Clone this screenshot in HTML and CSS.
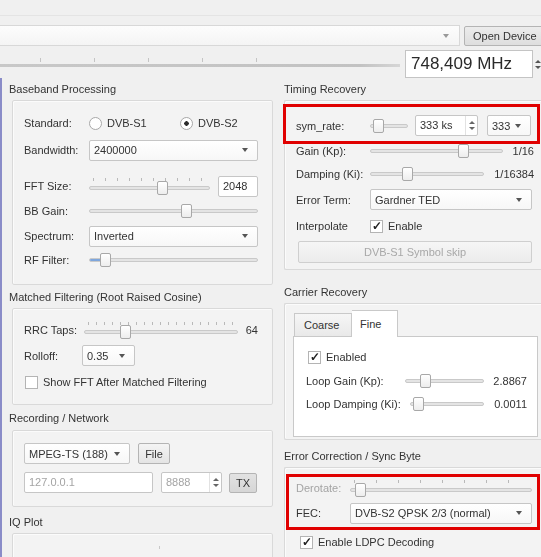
FILE: index.html
```html
<!DOCTYPE html>
<html>
<head>
<meta charset="utf-8">
<title>DVB-S2 Receiver</title>
<link rel="stylesheet" href="styles.css">
</head>
<body>
<div class="app">
  <div class="top">
    <div class="hline"></div>
    <div class="toprow1">
      <div class="devcombo"><span class="caret sm"></span></div>
      <div class="btn open">Open Device</div>
    </div>
    <div class="toprow2">
      <div class="freqslider"><div class="fticks"></div><div class="fgroove"></div></div>
      <div class="freq">748,409 MHz</div>
      <div class="fspin"><span class="u"></span><span class="d"></span></div>
    </div>
  </div>

  <div class="cols">
    <div class="col left">
      <div class="gtitle">Baseband Processing</div>
      <div class="gbox lbox bb">
        <div class="row">
          <span class="lbl w65">Standard:</span>
          <span class="radio"></span><span class="rtext first">DVB-S1</span>
          <span class="radio on"></span><span class="rtext">DVB-S2</span>
        </div>
        <div class="row m7">
          <span class="lbl w65">Bandwidth:</span>
          <div class="combo grow"><span class="ctext">2400000</span><span class="caret"></span></div>
        </div>
        <div class="row h22 m15">
          <span class="lbl w65">FFT Size:</span>
          <div class="slider ticked grow"><div class="ticks t12"></div><div class="groove"></div><div class="handle" style="left:68px"></div></div>
          <div class="edit w40 ml8">2048</div>
        </div>
        <div class="row m4">
          <span class="lbl w65">BB Gain:</span>
          <div class="slider grow"><div class="groove"></div><div class="handle" style="left:92px"></div></div>
        </div>
        <div class="row m5">
          <span class="lbl w65">Spectrum:</span>
          <div class="combo grow"><span class="ctext">Inverted</span><span class="caret"></span></div>
        </div>
        <div class="row m4">
          <span class="lbl w65">RF Filter:</span>
          <div class="slider grow"><div class="groove"><div class="fill" style="width:12px"></div></div><div class="handle" style="left:11px"></div></div>
        </div>
      </div>

      <div class="gtitle t2">Matched Filtering (Root Raised Cosine)</div>
      <div class="gbox lbox mf">
        <div class="row">
          <span class="lbl w60">RRC Taps:</span>
          <div class="slider ticked grow"><div class="ticks t8"></div><div class="groove"></div><div class="handle" style="left:36px"></div></div>
          <span class="val w20">64</span>
        </div>
        <div class="row h21 m5">
          <span class="lbl w58">Rolloff:</span>
          <div class="combo w53"><span class="ctext">0.35</span><span class="caret"></span></div>
        </div>
        <div class="row m6">
          <span class="check ml1"></span><span class="ctxt">Show FFT After Matched Filtering</span>
        </div>
      </div>

      <div class="gtitle t3">Recording / Network</div>
      <div class="gbox lbox rec">
        <div class="row h21">
          <div class="combo w106"><span class="ctext">MPEG-TS (188)</span><span class="caret"></span></div>
          <div class="btn w32 ml8">File</div>
        </div>
        <div class="row h21 m8">
          <div class="edit w129 dis">127.0.0.1</div>
          <div class="spin w61 ml8"><span class="sval dis">8888</span><span class="arr"><span class="u"></span><span class="d"></span></span></div>
          <div class="btn tx w28 ml7">TX</div>
        </div>
      </div>

      <div class="gtitle t4">IQ Plot</div>
      <div class="gbox lbox iq"><span class="iqdot"></span></div>
    </div>

    <div class="col right">
      <div class="gtitle">Timing Recovery</div>
      <div class="gbox rbox tr">
        <div class="redbox rb1">
          <div class="row h21">
            <span class="lbl w74">sym_rate:</span>
            <div class="slider w38"><div class="groove"></div><div class="handle" style="left:3px"></div></div>
            <div class="spin w63 ml7"><span class="sval">333 ks</span><span class="arr"><span class="u"></span><span class="d"></span></span></div>
            <div class="combo w44 ml9"><span class="ctext">333</span><span class="caret"></span></div>
          </div>
        </div>
        <div class="row rrow h14">
          <span class="lbl w74">Gain (Kp):</span>
          <div class="slider w133"><div class="groove"></div><div class="handle" style="left:88px"></div></div>
          <span class="val grow">1/16</span>
        </div>
        <div class="row rrow h14 m9">
          <span class="lbl w74">Damping (Ki):</span>
          <div class="slider w114"><div class="groove"></div><div class="handle" style="left:32px"></div></div>
          <span class="val grow">1/16384</span>
        </div>
        <div class="row rrow h21 m8">
          <span class="lbl w74">Error Term:</span>
          <div class="combo grow"><span class="ctext">Gardner TED</span><span class="caret"></span></div>
        </div>
        <div class="row rrow m6">
          <span class="lbl w74">Interpolate</span>
          <span class="check on">✓</span><span class="ctxt">Enable</span>
        </div>
        <div class="btn wide dis">DVB-S1 Symbol skip</div>
      </div>

      <div class="gtitle t5">Carrier Recovery</div>
      <div class="gbox rbox cr">
        <div class="tabs">
          <div class="tab">Coarse</div>
          <div class="tab sel">Fine</div>
        </div>
        <div class="pane">
          <div class="row prow">
            <span class="check on ml2">✓</span><span class="ctxt">Enabled</span>
          </div>
          <div class="row prow m4">
            <span class="lbl w99">Loop Gain (Kp):</span>
            <div class="slider w79"><div class="groove"></div><div class="handle" style="left:15px"></div></div>
            <span class="val grow">2.8867</span>
          </div>
          <div class="row prow m3">
            <span class="lbl w104">Loop Damping (Ki):</span>
            <div class="slider w74s"><div class="groove"></div><div class="handle" style="left:3px"></div></div>
            <span class="val grow">0.0011</span>
          </div>
        </div>
      </div>

      <div class="gtitle t6">Error Correction / Sync Byte</div>
      <div class="gbox rbox ec">
        <div class="redbox rb2">
          <div class="row">
            <span class="lbl w54 dis">Derotate:</span>
            <div class="slider ticked grow"><div class="ticks t22"></div><div class="groove"></div><div class="handle" style="left:5px"></div></div>
          </div>
          <div class="row h22 m4">
            <span class="lbl w54">FEC:</span>
            <div class="combo grow"><span class="ctext">DVB-S2 QPSK 2/3 (normal)</span><span class="caret"></span></div>
          </div>
        </div>
        <div class="row ldpc m2">
          <span class="check on">✓</span><span class="ctxt">Enable LDPC Decoding</span>
        </div>
      </div>
    </div>
  </div>
</div>
</body>
</html>
```

FILE: styles.css
```css
* { box-sizing: border-box; }
html, body { margin: 0; padding: 0; }
body {
  background: #f0f0f0;
  font-family: "Liberation Sans", Arial, sans-serif;
  font-size: 11px;
  color: #333;
  width: 541px;
  height: 557px;
  overflow: hidden;
}
.app { width: 541px; height: 557px; overflow: hidden; filter: blur(0.35px); }

/* top */
.top { height: 78px; padding-top: 15px; }
.hline { height: 1px; background: #e4e4e4; }
.toprow1 { display: flex; margin-top: 9px; height: 21px; }
.devcombo {
  width: 460px; flex: none; height: 21px;
  background: linear-gradient(#fdfdfd, #f4f4f4);
  border: 1px solid #d8d8d8; border-left: none;
  display: flex; align-items: center; justify-content: flex-end; padding-right: 10px;
}
.btn {
  display: flex; align-items: center; justify-content: center;
  background: linear-gradient(#f4f4f4, #e4e4e4);
  border: 1px solid #b4b4b4; border-radius: 2px; height: 21px; flex: none;
}
.btn.open { margin-left: 4px; width: 84px; height: 20px; margin-top: 1px; justify-content: flex-start; padding-left: 8px; background: linear-gradient(#ececec, #dedede); }
.toprow2 { display: flex; margin-top: 4px; height: 28px; }
.freqslider { width: 400px; flex: none; position: relative; }
.fticks { margin-top: 8px; margin-left: 40px; margin-right: 110px; height: 4px; background: repeating-linear-gradient(to right, #c4c4c4 0 1px, transparent 1px 54px); }
.fgroove { margin-top: 2px; height: 3px; background: linear-gradient(to right, #c8c8c8, #c2c2c2 90%, #d6d6d6); }
.freq {
  margin-left: 5px; width: 128px; height: 28px; flex: none;
  background: #fff; border: 1px solid #c4c4c4;
  font-size: 17px; line-height: 26px; padding-left: 5px; color: #2a2a2a;
}
.fspin { width: 10px; flex: none; display: flex; flex-direction: column; align-items: center; justify-content: center; gap: 3px; }

/* columns */
.cols { display: flex; align-items: flex-start; }
.col.left { width: 276px; flex: none; border-left: 2px solid #8a8cc8; height: 479px; padding-top: 1px; }
.col.right { width: 258px; flex: none; margin-left: 7px; padding-top: 1px; }

.gtitle { height: 20px; line-height: 20px; padding-left: 7px; color: #333; white-space: nowrap; }
.col.right .gtitle { padding-left: 1px; }
.gtitle.t2 { margin-top: 2px; }
.gtitle.t3 { margin-top: 3px; }
.gtitle.t4 { margin-top: 5px; }
.gtitle.t5 { margin-top: 12px; }
.gtitle.t6 { margin-top: 6px; }

.gbox {
  border: 1px solid #d9d9d9; border-radius: 2px;
  background: #f3f3f3;
  box-shadow: inset 1px 1px 0 #fbfbfb;
  margin-top: 1px;
}
.lbox { margin-left: 10px; width: 261px; padding: 12px 14px 0 11px; }
.bb { height: 185px; }
.mf { height: 97px; padding-top: 11px; }
.rec { height: 77px; margin-top: 2px; }
.iq { height: 40px; margin-top: 1px; position: relative; }
.iqdot { position: absolute; left: 146px; top: 12px; width: 1px; height: 3px; background: #c8c8c8; }

.rbox { margin-left: 1px; width: 262px; border-right: none; }
.tr { height: 170px; padding-top: 3px; }
.cr { height: 137px; }
.ec { height: 110px; }

/* rows */
.row { display: flex; align-items: center; height: 20px; white-space: nowrap; }
.h14 { height: 14px; }
.h21 { height: 21px; }
.h22 { height: 22px; }
.m2 { margin-top: 2px; }
.m3 { margin-top: 3px; }
.m4 { margin-top: 4px; }
.m5 { margin-top: 5px; }
.m6 { margin-top: 6px; }
.m7 { margin-top: 7px; }
.m8 { margin-top: 8px; }
.m9 { margin-top: 9px; }
.m15 { margin-top: 15px; }
.ml1 { margin-left: 1px; }
.ml2 { margin-left: 2px; }
.ml7 { margin-left: 7px; }
.ml8 { margin-left: 8px; }
.ml9 { margin-left: 9px; }
.grow { flex: 1; min-width: 0; }

.rrow { padding-left: 11px; padding-right: 14px; }
.rrow .val { margin-right: -2px; }
.lbl { flex: none; color: #333; }
.w54 { width: 54px; } .w58 { width: 58px; } .w60 { width: 60px; } .w65 { width: 65px; }
.w74 { width: 74px; } .w99 { width: 99px; } .w104 { width: 104px; }
.w20 { width: 20px; flex: none; } .w28 { width: 28px; } .w32 { width: 32px; }
.w38 { width: 38px; flex: none; } .w40 { width: 40px; flex: none; } .w44 { width: 44px; flex: none; }
.w53 { width: 53px; flex: none; } .w61 { width: 61px; flex: none; } .w63 { width: 63px; flex: none; }
.w74s { width: 74px; flex: none; } .w79 { width: 79px; flex: none; }
.w106 { width: 106px; flex: none; } .w114 { width: 114px; flex: none; }
.w129 { width: 129px; flex: none; } .w133 { width: 133px; flex: none; }
.val { text-align: right; color: #333; }
.dis { color: #a4a4a4; }

/* radio */
.radio { width: 13px; height: 13px; border-radius: 50%; border: 1px solid #a8a8a8; background: #fff; flex: none; }
.radio.on { background: radial-gradient(circle, #2c2c2c 0 2px, #fff 2.5px); }
.rtext { margin-left: 5px; }
.rtext.first { width: 73px; flex: none; }

/* combo */
.combo {
  height: 21px; display: flex; align-items: center; justify-content: space-between;
  background: linear-gradient(#ffffff, #f7f7f7);
  border: 1px solid #c6c6c6; border-radius: 2px; padding: 0 9px 0 4px;
}
.ctext { overflow: hidden; }
.caret { width: 0; height: 0; border-left: 3.5px solid transparent; border-right: 3.5px solid transparent; border-top: 4px solid #555; flex: none; }
.caret.sm { border-top-color: #999; }

/* edit / spin */
.edit { height: 21px; background: #fff; border: 1px solid #c6c6c6; border-radius: 2px; padding-left: 4px; line-height: 19px; flex: none; }
.spin { height: 21px; display: flex; background: #fff; border: 1px solid #c6c6c6; border-radius: 2px; }
.sval { flex: 1; padding-left: 4px; line-height: 19px; }
.arr { width: 12px; border-left: 1px solid #e2e2e2; display: flex; flex-direction: column; align-items: center; justify-content: center; gap: 3px; }
.u { width: 0; height: 0; border-left: 3px solid transparent; border-right: 3px solid transparent; border-bottom: 3px solid #666; }
.d { width: 0; height: 0; border-left: 3px solid transparent; border-right: 3px solid transparent; border-top: 3px solid #666; }
.fspin .u, .fspin .d { border-bottom-color: #555; border-top-color: #555; }

/* buttons */
.btn.tx { background: linear-gradient(#e2e2e2, #d6d6d6); height: 20px; }
.btn.wide { margin: 5px 14px 0 13px; height: 22px; color: #a8a8a8; background: linear-gradient(#f6f6f6, #ececec); border-color: #cfcfcf; }

/* slider */
.slider { position: relative; height: 20px; }
.groove { position: absolute; left: 0; right: 0; top: 8px; height: 4px; background: #e4e4e4; border: 1px solid #c9c9c9; border-radius: 2px; overflow: hidden; }
.fill { height: 100%; background: #7ea6dc; }
.handle { position: absolute; top: 3px; width: 11px; height: 14px; background: linear-gradient(#ffffff, #ededed); border: 1px solid #a8a8a8; border-radius: 2px; }
.slider.ticked .groove { top: 10px; }
.slider.ticked .handle { top: 5px; }
.ticks { position: absolute; left: 4px; right: 4px; top: 2px; height: 3px; }
.t8 { background: repeating-linear-gradient(to right, #b9b9b9 0 1px, transparent 1px 8px); }
.t12 { background: repeating-linear-gradient(to right, #b9b9b9 0 1px, transparent 1px 12px); }
.t22 { background: repeating-linear-gradient(to right, #b9b9b9 0 1px, transparent 1px 22px); }
.h14 .slider { height: 14px; }
.h14 .groove { top: 5px; }
.h14 .handle { top: 0; }

/* checkbox */
.check {
  width: 13px; height: 13px; flex: none; border: 1px solid #b4b4b4; background: #fff;
  display: flex; align-items: center; justify-content: center;
  font-size: 12px; font-weight: bold; color: #222; line-height: 1;
}
.ctxt { margin-left: 5px; }

/* red annotation boxes */
.redbox { border: 3px solid #e00000; }
.rb1 { margin-left: -2px; width: 257px; height: 40px; padding: 8px 0 0 10px; }
.rb2 { margin-left: 1px; width: 254px; height: 56px; margin-top: 6px; padding: 1px 5px 0 7px; }
.ldpc { padding-left: 15px; }

/* tabs */
.tabs { display: flex; align-items: flex-end; height: 26px; margin: 6px 0 0 9px; position: relative; z-index: 1; }
.tab { height: 23px; line-height: 22px; border: 1px solid #c9c9c9; border-bottom: none; background: linear-gradient(#f6f6f6, #e9e9e9); width: 58px; padding-left: 9px; }
.tab.sel { width: 46px; background: #fff; margin-bottom: -1px; height: 27px; border-left: none; padding-left: 8px; line-height: 26px; }
.pane { margin-left: 8px; width: 245px; height: 101px; background: #fff; border: 1px solid #c9c9c9; padding-top: 10px; }
.prow { padding-left: 12px; padding-right: 10px; }
.prow .val { padding-right: 0; }
```
